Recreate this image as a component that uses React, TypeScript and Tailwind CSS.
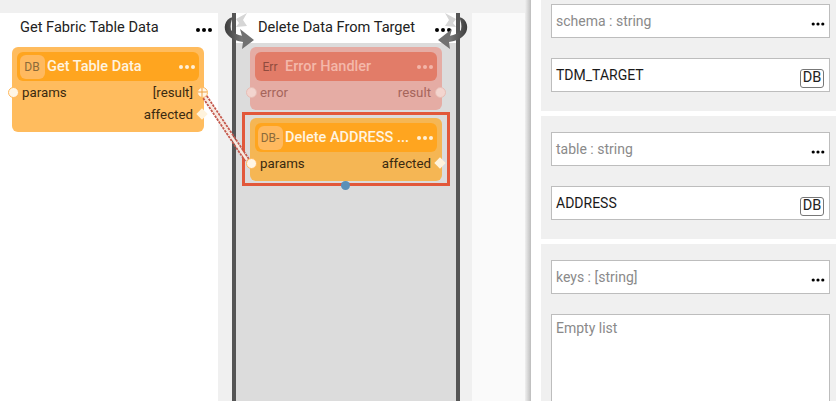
const font = "font-['Roboto',sans-serif]";

function Dots({ className }: { className: string }) {
  return (
    <span className={`flex gap-[2px] ${className}`}>
      <i className="size-[4px] rounded-full bg-current" />
      <i className="size-[4px] rounded-full bg-current" />
      <i className="size-[4px] rounded-full bg-current" />
    </span>
  );
}

function Port({ side, diamond, dim }: { side: "left" | "right"; diamond?: boolean; dim?: boolean }) {
  if (diamond) {
    return <span className="absolute -right-[2px] top-1/2 -mt-[4px] size-[8px] rotate-45 bg-[#fff3dc]" />;
  }
  const pos = side === "left" ? "-left-[4px]" : "-right-[3.5px]";
  return (
    <span
      className={`absolute ${pos} top-1/2 -mt-[5.5px] size-[11px] rounded-full border ${
        dim ? "border-[#e8bdb5] bg-[#f3d5cf]" : "border-[#ffb95e] bg-[#fff6e6]"
      }`}
    />
  );
}

function Header({ tag, title, error }: { tag: string; title: string; error?: boolean }) {
  return (
    <div className={`flex h-[29px] items-center rounded-[6px] pl-[2.5px] pr-[3px] ${error ? "bg-[#e27c68]" : "bg-[#ffa51f]"}`}>
      <span
        className={`flex h-[24px] w-[25px] shrink-0 items-center justify-center overflow-hidden rounded-[6px] text-[12px] ${
          error ? "text-[#8f4b3d]" : "bg-[#ffb95f] text-[#8a6a3a]"
        }`}
      >
        {tag}
      </span>
      <span className={`ml-[2.5px] mt-[1px] flex-1 truncate text-[14.5px] font-medium ${error ? "text-[#f4b8aa]" : "text-[#fff4e0]"}`}>
        {title}
      </span>
      <Dots className={error ? "mr-[1px] text-[#f3b5a8]" : "mr-[1px] text-[#fff0d8]"} />
    </div>
  );
}

function Row({ left, right, rightDiamond, error, crossed }: { left?: string; right: string; rightDiamond?: boolean; error?: boolean; crossed?: boolean }) {
  return (
    <div className={`relative flex h-[22px] items-center justify-between pl-[10px] pr-[11px] text-[13.3px] ${error ? "text-[#a5655b]" : "text-[#3a2a10]"}`}>
      <span className="mt-[2px]">{left}</span>
      <span className="mt-[2px]">{right}</span>
      {left && <Port side="left" dim={error} />}
      {crossed ? (
        <span className="absolute -right-[3.5px] top-1/2 -mt-[5.5px] size-[11px] rounded-full border border-[#ffb95e] bg-[#fff6e6]">
          <i className="absolute left-1/2 top-0 h-full w-px -translate-x-1/2 bg-[#f0a040]" />
          <i className="absolute left-0 top-1/2 h-px w-full -translate-y-1/2 bg-[#f0a040]" />
        </span>
      ) : (
        <Port side="right" diamond={rightDiamond} dim={error} />
      )}
    </div>
  );
}

function Field({ text, muted, db, dots, tall }: { text: string; muted?: boolean; db?: boolean; dots?: boolean; tall?: boolean }) {
  return (
    <div
      className={`relative mr-[6px] border border-[#bdbdbd] bg-white pl-[4px] text-[14px] ${
        tall ? "h-[100px] pt-[3px]" : "flex h-[34px] items-center"
      } ${muted ? "text-[#8a8a8a]" : "text-[#1a1a1a]"}`}
    >
      <span>{text}</span>
      {dots && <Dots className="absolute right-[3px] top-[17px] scale-[0.8] text-black" />}
      {db && (
        <span className="absolute bottom-[3px] right-[5px] flex h-[19px] w-[24px] items-center justify-center rounded-[3px] border border-[#777] text-[14.5px] leading-none text-[#222]">
          DB
        </span>
      )}
    </div>
  );
}

function Section({ children, first }: { children: React.ReactNode; first?: boolean }) {
  return (
    <div className={`ml-[10px] flex flex-col gap-[20px] bg-[#f0f0f0] pb-[19px] pl-[10px] pt-[16px] ${first ? "-mt-[12px]" : ""}`}>
      {children}
    </div>
  );
}

function CornerArrows({ flip }: { flip?: boolean }) {
  const id = flip ? "ringR" : "ringL";
  return (
    <svg
      width="36"
      height="38"
      viewBox="0 0 36 38"
      className={`absolute -top-[1px] ${flip ? "-right-[14px] -scale-x-100" : "-left-[14px]"}`}
    >
      <defs>
        <linearGradient id={id} x1="0" y1="0" x2="1" y2="0">
          <stop offset="0" stopColor="#3d3d3d" />
          <stop offset="0.5" stopColor="#5a5a5a" />
          <stop offset="1" stopColor="#7a7a7a" />
        </linearGradient>
      </defs>
      <path d="M25 1 L14 7 L17 11 L14 15 L25 14 L21 8 Z" fill="#d6d6d6" />
      <path d="M11 5 C2 7 1 17 5 22 C9 27 14 29 21 30 L21 24 C15 23 11 21 9 18 C8 13 9 9 11 5 Z" fill={`url(#${id})`} />
      <path d="M18 17 L32 28 L20 37 L21 30 L20 24 Z" fill="#717171" />
    </svg>
  );
}

export default function App() {
  return (
    <div className={`relative flex h-[401px] w-[836px] overflow-hidden bg-[#f0f0f0] ${font}`}>
      {/* canvas */}
      <div className="relative flex w-[525px] shrink-0 pt-[13px]">
        <div className="w-[218px] shrink-0 bg-white">
          <div className="flex h-[30px] items-center justify-between pl-[20px] pr-[6px] text-[14.6px] text-[#222]">
            <span>Get Fabric Table Data</span>
            <Dots className="mt-[4px] text-black" />
          </div>
          <div className="ml-[12px] mt-[4px] h-[85px] w-[192px] rounded-[6px] bg-[#ffbc5e] pt-[5px]">
            <div className="mx-[5px]">
              <Header tag="DB" title="Get Table Data" />
            </div>
            <Row left="params" right="[result]" crossed />
            <Row right="affected" rightDiamond />
          </div>
        </div>

        <div className="relative ml-[14px] w-[228px] shrink-0 border-x-4 border-[#555] bg-[#dcdcdc]">
          <div className="flex h-[30px] items-center justify-between bg-white pl-[22px] pr-[5px] text-[14.6px] text-[#222]">
            <span>Delete Data From Target</span>
            <Dots className="mt-[4px] text-black" />
          </div>
          <div className="ml-[14px] mt-[4px] h-[63px] w-[192px] rounded-[6px] bg-[#e5aca4] pt-[5px]">
            <div className="mx-[5px]">
              <Header tag="Err" title="Error Handler" error />
            </div>
            <Row left="error" right="result" error />
          </div>
          <div className="relative ml-[6px] mt-[2px] h-[74px] w-[208px] border-[3px] border-[#e2583a] pl-[5px] pt-[3px]">
            <div className="h-[63px] w-[192px] rounded-[6px] bg-[#f5b654] pt-[5px]">
              <div className="mx-[5px]">
                <Header tag="DB-" title="Delete ADDRESS ..." />
              </div>
              <Row left="params" right="affected" rightDiamond />
            </div>
            <span className="absolute left-[96px] top-[66px] size-[9px] rounded-full bg-[#5a90b8]" />
          </div>
          <CornerArrows />
          <CornerArrows flip />
        </div>

        <div className="ml-[12px] w-[53px] shrink-0 bg-[#fafafa]" />

        <svg width="60" height="90" viewBox="0 0 60 90" className="absolute left-[198px] top-[85px]">
          <path d="M7 12 L49 75" stroke="#c4574b" strokeWidth="6" strokeDasharray="2.5 1" fill="none" />
          <path d="M7 12 L49 75" stroke="#f8e9e0" strokeWidth="2.4" fill="none" />
        </svg>
      </div>

      {/* properties panel */}
      <div className="h-full w-[6px] shrink-0 bg-gradient-to-r from-[#f0f0f0] to-[#bdbdbd]" />
      <div className="flex flex-1 flex-col gap-[5px] bg-white">
        <Section first>
          <Field text="schema : string" muted dots />
          <Field text="TDM_TARGET" db />
        </Section>
        <Section>
          <Field text="table : string" muted dots />
          <Field text="ADDRESS" db />
        </Section>
        <Section>
          <Field text="keys : [string]" muted dots />
          <Field text="Empty list" muted tall />
        </Section>
      </div>
    </div>
  );
}
